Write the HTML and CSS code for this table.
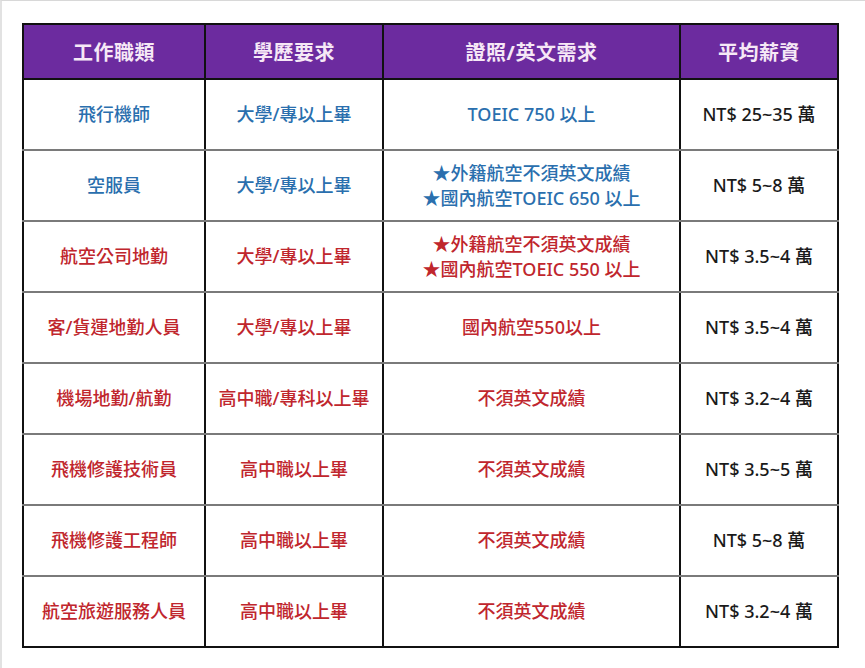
FILE: index.html
```html
<!DOCTYPE html>
<html lang="zh-Hant">
<head>
<meta charset="utf-8">
<link rel="stylesheet" href="styles.css">
</head>
<body>
<div class="frame">
<table class="jobs">
  <colgroup>
    <col class="c1"><col class="c2"><col class="c3"><col class="c4">
  </colgroup>
  <thead>
    <tr><th>工作職類</th><th>學歷要求</th><th>證照/英文需求</th><th>平均薪資</th></tr>
  </thead>
  <tbody>
    <tr class="blue"><td>飛行機師</td><td>大學/專以上畢</td><td>TOEIC 750 以上</td><td class="pay">NT$ 25~35 萬</td></tr>
    <tr class="blue"><td>空服員</td><td>大學/專以上畢</td><td class="two">★外籍航空不須英文成績<br>★國內航空TOEIC 650 以上</td><td class="pay">NT$ 5~8 萬</td></tr>
    <tr class="red"><td>航空公司地勤</td><td>大學/專以上畢</td><td class="two">★外籍航空不須英文成績<br>★國內航空TOEIC 550 以上</td><td class="pay">NT$ 3.5~4 萬</td></tr>
    <tr class="red"><td>客/貨運地勤人員</td><td>大學/專以上畢</td><td>國內航空550以上</td><td class="pay">NT$ 3.5~4 萬</td></tr>
    <tr class="red"><td>機場地勤/航勤</td><td>高中職/專科以上畢</td><td>不須英文成績</td><td class="pay">NT$ 3.2~4 萬</td></tr>
    <tr class="red"><td>飛機修護技術員</td><td>高中職以上畢</td><td>不須英文成績</td><td class="pay">NT$ 3.5~5 萬</td></tr>
    <tr class="red"><td>飛機修護工程師</td><td>高中職以上畢</td><td>不須英文成績</td><td class="pay">NT$ 5~8 萬</td></tr>
    <tr class="red"><td>航空旅遊服務人員</td><td>高中職以上畢</td><td>不須英文成績</td><td class="pay">NT$ 3.2~4 萬</td></tr>
  </tbody>
</table>
</div>
</body>
</html>
```
FILE: styles.css
```css
html, body {
  margin: 0;
  padding: 0;
  background: #ffffff;
}
.frame {
  width: 865px;
  height: 668px;
  box-sizing: border-box;
  border-top: 1px solid #d8d8d8;
  border-left: 2px solid #e2e2e2;
  padding: 22px 0 0 20px;
  font-family: "Noto Sans", "Noto Sans CJK TC", sans-serif;
}
.jobs {
  border-collapse: collapse;
  table-layout: fixed;
  width: 815px;
  border: 2px solid #111;
}
.c1 { width: 182px; }
.c2 { width: 178px; }
.c3 { width: 297px; }
.c4 { width: 158px; }
.jobs th {
  background: #6c2b9f;
  color: #f6e8f6;
  font-size: 20px;
  font-weight: 700;
  letter-spacing: 0.5px;
  height: 53px;
  padding: 0;
  border: 2px solid #111;
  text-align: center;
  vertical-align: middle;
}
.jobs td {
  height: 69px;
  padding: 0;
  font-size: 18px;
  font-weight: 500;
  line-height: 25px;
  text-align: center;
  vertical-align: middle;
  border-left: 2px solid #111;
  border-right: 2px solid #111;
  border-top: 2px solid #7a7a7a;
  border-bottom: 2px solid #7a7a7a;
}
.jobs tbody tr:last-child td {
  border-bottom: 2px solid #111;
}
.blue td { color: #2a6fae; }
.red td { color: #c0262d; }
.jobs td.pay { color: #1a1a1a; }
```
